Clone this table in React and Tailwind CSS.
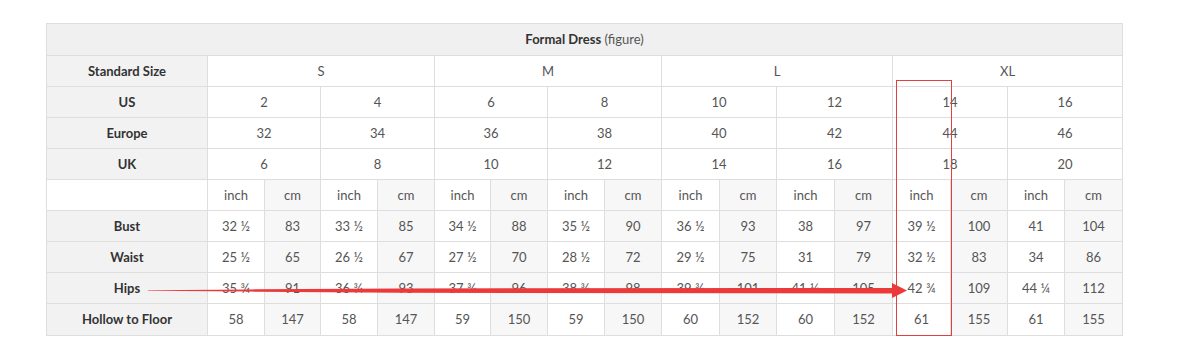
import React from "react";

const widths = [57, 56, 57, 57, 56, 57, 57, 57, 58, 57, 58, 58, 58, 57, 57, 58];

const rowsData = [
  ["Bust", ["32 ½", "83", "33 ½", "85", "34 ½", "88", "35 ½", "90", "36 ½", "93", "38", "97", "39 ½", "100", "41", "104"]],
  ["Waist", ["25 ½", "65", "26 ½", "67", "27 ½", "70", "28 ½", "72", "29 ½", "75", "31", "79", "32 ½", "83", "34", "86"]],
  ["Hips", ["35 ¾", "91", "36 ¾", "93", "37 ¾", "96", "38 ¾", "98", "39 ¾", "101", "41 ¼", "105", "42 ¾", "109", "44 ¼", "112"]],
  ["Hollow to Floor", ["58", "147", "58", "147", "59", "150", "59", "150", "60", "152", "60", "152", "61", "155", "61", "155"]],
];

const td = "border border-[#dedede] text-center align-middle p-0";
const label = "border border-[#dedede] text-center align-middle p-0 bg-[#f2f2f2] font-bold text-[#333]";

export default function App() {
  return (
    <div className="w-[1200px] h-[342px] bg-white pt-[23px] pl-[46px]" style={{ fontFamily: "Lato, 'Open Sans', sans-serif" }}>
      <div className="relative w-[1076px]">
        <table className="table-fixed border-collapse w-[1076px] text-[13px] text-[#555] leading-none">
          <colgroup>
            <col style={{ width: 161 }} />
            {widths.map((w, i) => (
              <col key={i} style={{ width: w }} />
            ))}
          </colgroup>
          <tbody>
            <tr className="h-[32px]">
              <td colSpan={17} className="border border-[#dedede] bg-[#f0f0f0] text-center align-middle">
                <span className="font-bold text-[#333]">Formal Dress</span>{" "}
                <span className="text-[#555]">(figure)</span>
              </td>
            </tr>
            <tr className="h-[31px]">
              <td className={label}>Standard Size</td>
              {["S", "M", "L", "XL"].map((s) => (
                <td key={s} colSpan={4} className={td}>{s}</td>
              ))}
            </tr>
            {[
              ["US", ["2", "4", "6", "8", "10", "12", "14", "16"]],
              ["Europe", ["32", "34", "36", "38", "40", "42", "44", "46"]],
              ["UK", ["6", "8", "10", "12", "14", "16", "18", "20"]],
            ].map(([name, vals]) => (
              <tr key={name} className="h-[31px]">
                <td className={label}>{name}</td>
                {vals.map((v, i) => (
                  <td key={i} colSpan={2} className={td}>{v}</td>
                ))}
              </tr>
            ))}
            <tr className="h-[31px]">
              <td className={td}></td>
              {widths.map((_, i) => (
                <td key={i} className={`${td} ${i % 2 === 1 ? "bg-[#f7f7f7]" : "bg-white"}`}>
                  {i % 2 === 0 ? "inch" : "cm"}
                </td>
              ))}
            </tr>
            {rowsData.map(([name, vals], ri) => (
              <tr key={name} className={ri === 3 ? "h-[32px]" : "h-[31px]"}>
                <td className={label}>{name}</td>
                {vals.map((v, i) => (
                  <td key={i} className={`${td} ${i % 2 === 1 ? "bg-[#f7f7f7]" : "bg-white"}`}>{v}</td>
                ))}
              </tr>
            ))}
          </tbody>
        </table>
        <div className="absolute left-[850px] top-[57px] w-[56px] h-[256px] border border-[#e0403e] pointer-events-none" />
        <svg className="absolute left-0 top-0 pointer-events-none" width="1076" height="320" viewBox="0 0 1076 320">
          <polygon
            points="102,267.2 204,266.4 354,265.4 846,265 846,260 861,267.5 846,275 846,270.5 354,269.8 204,268.6 102,267.8"
            fill="#ec3a3a"
          />
        </svg>
      </div>
    </div>
  );
}
